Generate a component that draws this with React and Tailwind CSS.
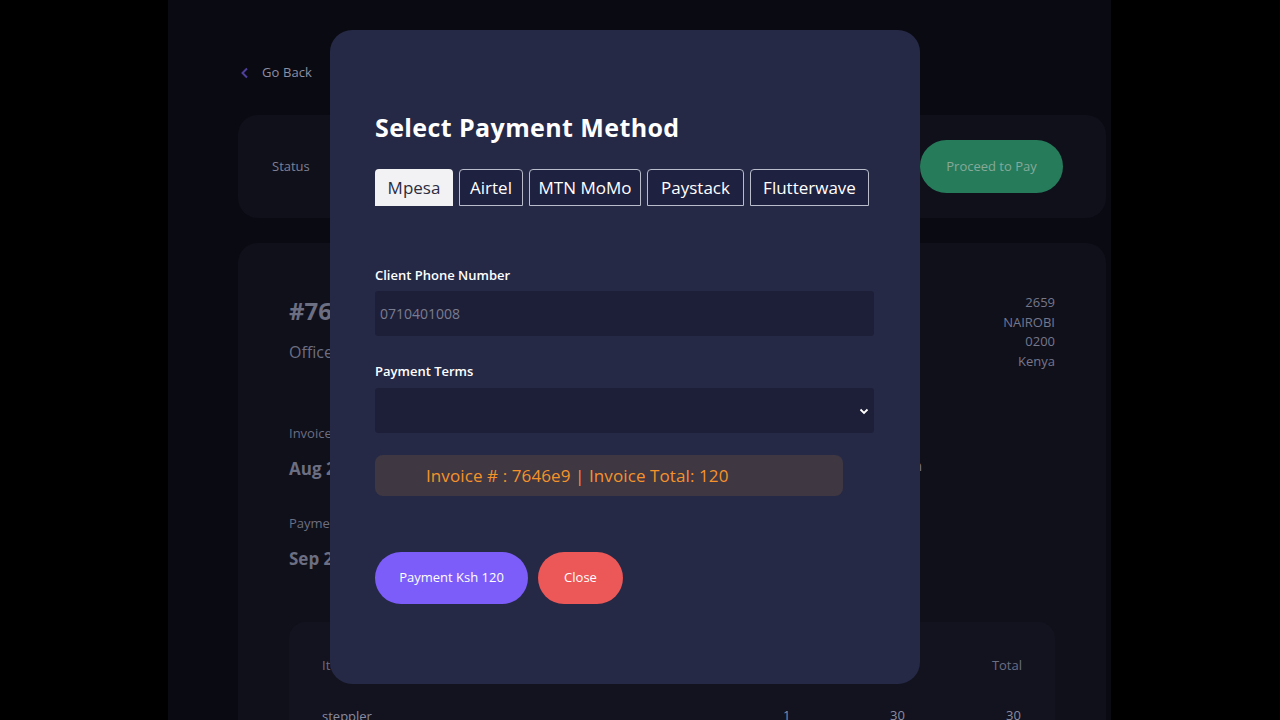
import React from "react";

const font = { fontFamily: '"Open Sans", "Noto Sans", sans-serif' };

export default function App() {
  return (
    <div className="relative w-[1280px] h-[720px] overflow-hidden bg-black" style={font}>
      <div className="ml-[168px] w-[943px] h-[720px] bg-[#0a0a12] pt-[60px] pl-[70px] pr-[5px]">
        <div className="flex items-center gap-[12px] h-[24px] ml-[2px] mt-[1px]">
          <svg width="10" height="12" viewBox="0 0 10 12">
            <path d="M7 1.5 L2.5 6 L7 10.5" stroke="#4e3f99" strokeWidth="2" fill="none" />
          </svg>
          <span className="text-[13px] text-[#8d8fa3] tracking-[0.1px]">Go Back</span>
        </div>
        <div className="mt-[30px] h-[103px] rounded-[20px] bg-[#10101b] flex items-center justify-between pl-[34px] pr-[43px]">
          <span className="text-[13px] text-[#7e8094]">Status</span>
          <button className="h-[53px] w-[143px] rounded-full bg-[#267b5b] text-[13px] text-[#86a999]">
            Proceed to Pay
          </button>
        </div>
        <div className="mt-[25px] h-[500px] rounded-[20px] bg-[#10101b] pt-[48px] px-[51px]">
          <div className="flex justify-between">
            <div className="pt-[4px]">
              <div className="text-[24px] font-bold text-[#6c6e82] leading-[32px]">#7646e9</div>
              <div className="text-[16px] text-[#6c6e82] mt-[13px]">Office supplies</div>
            </div>
            <div className="text-right text-[13px] text-[#75778b] leading-[19.5px] pt-[2px]">
              <div>2659</div>
              <div>NAIROBI</div>
              <div>0200</div>
              <div>Kenya</div>
            </div>
          </div>
          <div className="flex mt-[53px]">
            <div className="w-[300px] shrink-0">
              <div className="text-[13px] text-[#6c6e82]">Invoice Date</div>
              <div className="text-[17px] font-bold text-[#6c6e82] mt-[12px]">Aug 21, 2023</div>
              <div className="text-[13px] text-[#6c6e82] mt-[33px]">Payment Due</div>
              <div className="text-[17px] font-bold text-[#6c6e82] mt-[12px]">Sep 20, 2023</div>
            </div>
            <div className="w-[333px] shrink-0 text-right pt-[30px] text-[15px] font-bold text-[#6c6e82]">Daniel Kiprotich Simon</div>
          </div>
          <div className="mt-[51px] rounded-t-[16px] bg-[#13131f] h-[200px] px-[33px] pt-[34px]">
            <div className="flex text-[13px] text-[#6c6e82]">
              <span className="flex-1">Item Name</span>
              <span className="w-[120px] text-right">QTY.</span>
              <span className="w-[110px] text-right">Price</span>
              <span className="w-[120px] text-right">Total</span>
            </div>
            <div className="flex text-[13px] text-[#8a8ca0] mt-[31px]">
              <span className="flex-1">steppler</span>
            </div>
          </div>
        </div>
      </div>

      {/* items row numbers behind */}
      <div className="absolute left-[783px] top-[706px] text-[13px] text-[#8a8ca0] flex">
        <span className="w-[107px]">1</span>
        <span className="w-[116px]">30</span>
        <span>30</span>
      </div>

      {/* Modal */}
      <div className="absolute left-[330px] top-[30px] w-[590px] h-[654px] rounded-[22px] bg-[#252945] pl-[45px] pr-[46px] pt-[79px]">
        <h2 className="text-[25px] font-bold text-white leading-[36px] tracking-[0.4px]">Select Payment Method</h2>
        <div className="flex gap-[6px] mt-[24px]">
          <button className="h-[37px] w-[78px] rounded-t-[4px] bg-[#f2f2f4] text-[17px] text-[#2b2d3f]">Mpesa</button>
          <button className="h-[37px] w-[64px] rounded-t-[4px] border border-[#b9bccb] bg-[#1f2140] text-[17px] text-white">Airtel</button>
          <button className="h-[37px] w-[112px] rounded-t-[4px] border border-[#b9bccb] bg-[#1f2140] text-[17px] text-white">MTN MoMo</button>
          <button className="h-[37px] w-[97px] rounded-t-[4px] border border-[#b9bccb] bg-[#1f2140] text-[17px] text-white">Paystack</button>
          <button className="h-[37px] w-[119px] rounded-t-[4px] border border-[#b9bccb] bg-[#1f2140] text-[17px] text-white">Flutterwave</button>
        </div>
        <label className="block mt-[60px] text-[13px] font-semibold text-white leading-[18px]">Client Phone Number</label>
        <div className="mt-[7px] h-[45px] w-[499px] rounded-[3px] bg-[#1d1f38] flex items-center pl-[5px] text-[14px] text-[#7a7c90]">
          0710401008
        </div>
        <label className="block mt-[26px] text-[13px] font-semibold text-white leading-[18px]">Payment Terms</label>
        <div className="mt-[8px] h-[45px] w-[499px] rounded-[3px] bg-[#1d1f38] flex items-center justify-end pr-[4px]">
          <svg width="12" height="12" viewBox="0 0 12 12">
            <path d="M2.5 4.5 L6 8 L9.5 4.5" stroke="#ffffff" strokeWidth="1.8" fill="none" />
          </svg>
        </div>
        <div className="mt-[22px] h-[41px] w-[468px] rounded-[8px] bg-[#3f3742] flex items-center pl-[51px] text-[17px] text-[#f5932a] tracking-[0.1px]">
          Invoice # : 7646e9 | Invoice Total: 120
        </div>
        <div className="flex gap-[10px] mt-[56px]">
          <button className="h-[52px] w-[153px] rounded-full bg-[#7c5dfa] text-[13px] text-white">Payment Ksh 120</button>
          <button className="h-[52px] w-[85px] rounded-full bg-[#ec5757] text-[13px] text-white">Close</button>
        </div>
      </div>
    </div>
  );
}
